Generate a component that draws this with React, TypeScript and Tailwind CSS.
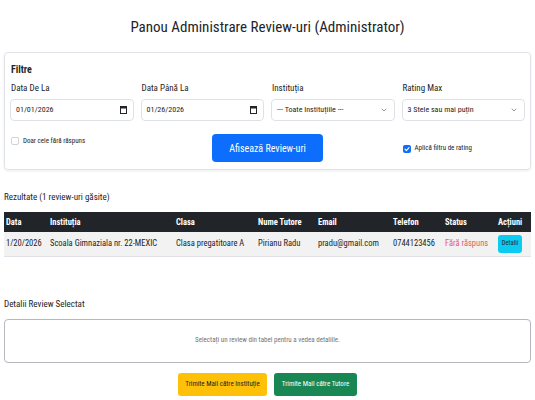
import { ChevronDown } from "lucide-react";

const font = "font-['Roboto','Open_Sans',sans-serif] font-stretch-[75%]";

type Review = {
  data: string;
  institutie: string;
  clasa: string;
  tutore: string;
  email: string;
  telefon: string;
  status: string;
};

const reviews: Review[] = [
  {
    data: "1/20/2026",
    institutie: "Scoala Gimnaziala nr. 22-MEXIC",
    clasa: "Clasa pregatitoare A",
    tutore: "Pirianu Radu",
    email: "pradu@gmail.com",
    telefon: "0744123456",
    status: "Fără răspuns",
  },
];

export default function App() {
  return (
    <div className={`${font} min-h-[400px] bg-white px-[4px] text-[#212529]`}>
      <h1 className="pt-[17px] text-center text-[15px] leading-[20px]">
        Panou Administrare Review-uri (Administrator)
      </h1>

      {/* FILTRE */}
      <div className="mt-[15px] rounded-[4px] border border-[#dfe2e6] px-[5px] pt-[10px] pb-[7px] shadow-[0_1px_3px_rgba(0,0,0,0.08)]">
        <h2 className="pl-[1px] text-[10px] font-bold leading-[14px]">Filtre</h2>

        <div className="mt-[5px] grid grid-cols-4 gap-x-[7px]">
          <Field label="Data De La">
            <DateBox value="01/01/2026" />
          </Field>
          <Field label="Data Până La">
            <DateBox value="01/26/2026" />
          </Field>
          <Field label="Instituția">
            <SelectBox value="--- Toate Instituțiile ---" />
          </Field>
          <Field label="Rating Max">
            <SelectBox value="3 Stele sau mai puțin" />
          </Field>
        </div>

        <div className="mt-[13px] grid grid-cols-4 gap-x-[7px]">
          <div className="pt-[2px]">
            <Check label="Doar cele fără răspuns" />
          </div>
          <div className="col-span-2 flex justify-center">
            <button className="h-[28px] w-[111px] rounded-[4px] bg-[#0d6efd] text-[10px] text-white">
              Afisează Review-uri
            </button>
          </div>
          <div className="flex items-center pt-[1px]">
            <Check label="Aplică filtru de rating" checked />
          </div>
        </div>
      </div>

      {/* REZULTATE */}
      <h3 className="mt-[20px] text-[9px] leading-[14px]">Rezultate (1 review-uri găsite)</h3>

      <table className="mt-[8px] w-full table-fixed border-collapse text-left text-[8.5px]">
        <colgroup>
          <col className="w-[44px]" />
          <col className="w-[126px]" />
          <col className="w-[82px]" />
          <col className="w-[60px]" />
          <col className="w-[75px]" />
          <col className="w-[52px]" />
          <col className="w-[53px]" />
          <col className="w-[35px]" />
        </colgroup>
        <thead className="bg-[#212529] text-white">
          <tr className="h-[20px]">
            {["Data", "Instituția", "Clasa", "Nume Tutore", "Email", "Telefon", "Status", "Acțiuni"].map((h) => (
              <th key={h} className="pl-[2px] font-bold">
                {h}
              </th>
            ))}
          </tr>
        </thead>
        <tbody>
          {reviews.map((r) => (
            <tr key={r.email} className="h-[24px] border-b border-[#dee2e6] bg-[#f2f2f2]">
              <td className="pl-[2px]">{r.data}</td>
              <td className="pl-[2px]">{r.institutie}</td>
              <td className="pl-[2px]">{r.clasa}</td>
              <td className="pl-[2px]">{r.tutore}</td>
              <td className="pl-[2px]">{r.email}</td>
              <td className="pl-[2px]">{r.telefon}</td>
              <td className="pl-[2px] text-[#e35d6a]">{r.status}</td>
              <td className="pl-[2px]">
                <button className="h-[18px] w-[24px] rounded-[3px] bg-[#0dcaf0] text-[6.5px] text-[#212529]">
                  Detalii
                </button>
              </td>
            </tr>
          ))}
        </tbody>
      </table>

      {/* DETALII */}
      <h3 className="mt-[40px] text-[9px] leading-[14px]">Detalii Review Selectat</h3>
      <div className="mt-[8px] flex h-[44px] items-center justify-center rounded-[4px] border border-[#b5b9bd] text-[7px] text-[#6c757d]">
        Selectați un review din tabel pentru a vedea detaliile.
      </div>

      <div className="mt-[10px] flex justify-center gap-[7px]">
        <button className="h-[23px] w-[89px] whitespace-nowrap rounded-[3px] bg-[#ffc107] text-[7px] text-[#212529]">
          Trimite Mail către Instituție
        </button>
        <button className="h-[23px] w-[83px] whitespace-nowrap rounded-[3px] bg-[#198754] text-[7px] text-white">
          Trimite Mail către Tutore
        </button>
      </div>
    </div>
  );
}

/* ---------------- UI COMPONENTS ---------------- */

function Field({ label, children }: { label: string; children: React.ReactNode }) {
  return (
    <div>
      <div className="mb-[5px] pl-[1px] text-[9px] leading-[12px]">{label}</div>
      {children}
    </div>
  );
}

function DateBox({ value }: { value: string }) {
  return (
    <div className="flex h-[22px] items-center justify-between rounded-[4px] border border-[#dee2e6] bg-white pr-[6px] pl-[5px] text-[8px]">
      <span>{value}</span>
      <svg width="7" height="8" viewBox="0 0 7 8" fill="none">
        <rect x="0.5" y="0.5" width="6" height="7" stroke="#212529" />
        <rect x="0.5" y="0.5" width="6" height="2" fill="#212529" />
      </svg>
    </div>
  );
}

function SelectBox({ value }: { value: string }) {
  return (
    <div className="flex h-[22px] items-center justify-between rounded-[4px] border border-[#dee2e6] bg-white pr-[6px] pl-[5px] text-[8px]">
      <span>{value}</span>
      <ChevronDown size={8} strokeWidth={1.6} className="text-[#343a40]" />
    </div>
  );
}

function Check({ label, checked = false }: { label: string; checked?: boolean }) {
  return (
    <label className="flex items-center gap-[4px] pl-[1px] text-[7px]">
      {checked ? (
        <span className="flex h-[8px] w-[8px] items-center justify-center rounded-[2px] bg-[#0d6efd]">
          <svg width="6" height="6" viewBox="0 0 6 6" fill="none">
            <path d="M1 3.2 2.4 4.6 5 1.6" stroke="white" strokeWidth="1.1" strokeLinecap="round" strokeLinejoin="round" />
          </svg>
        </span>
      ) : (
        <span className="h-[8px] w-[8px] rounded-[2px] border border-[#d0d4d8] bg-white" />
      )}
      <span className="text-[#212529]">{label}</span>
    </label>
  );
}
